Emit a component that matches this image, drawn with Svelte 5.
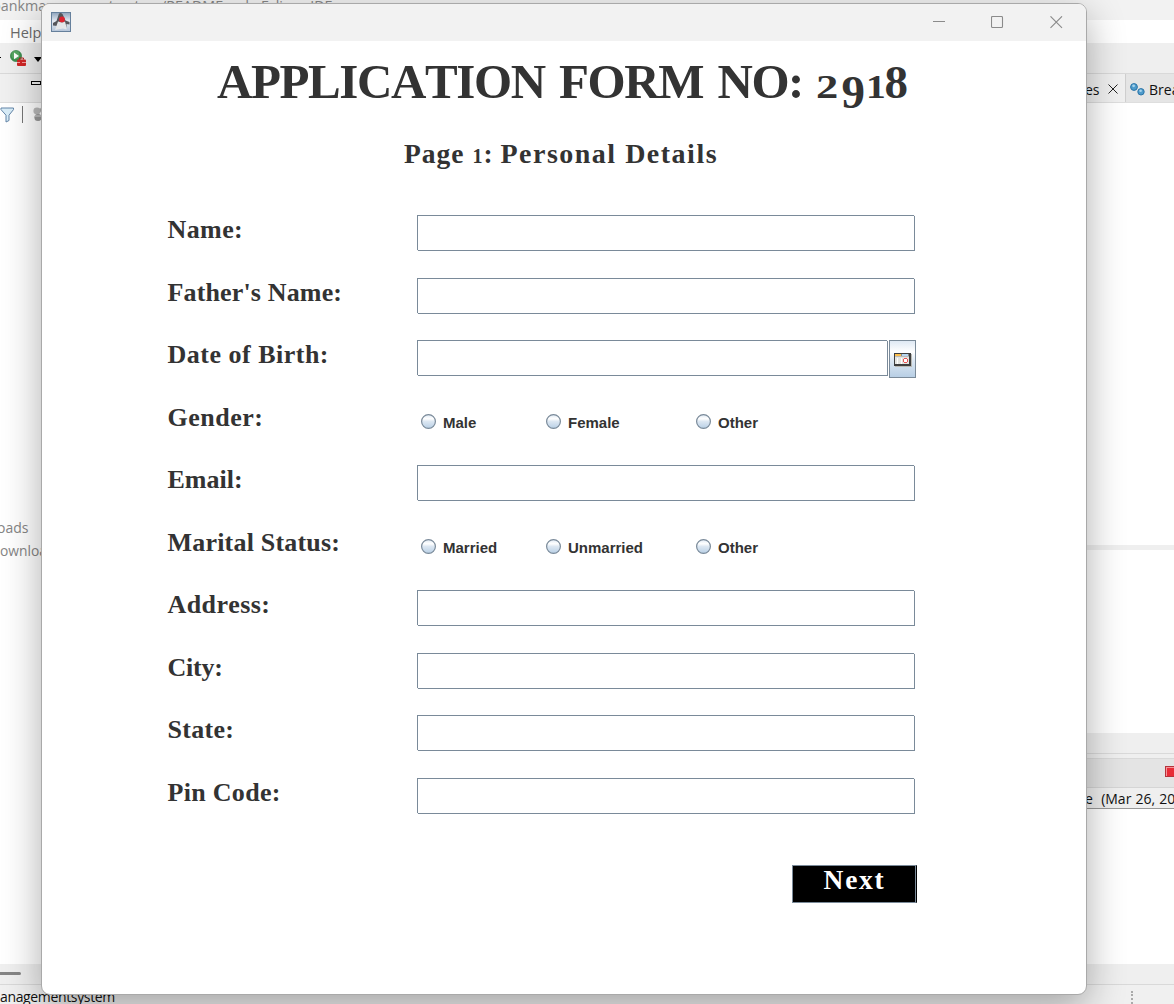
<script>
  const fields = [
    { label: 'Name:', track: 0.4, kind: 'text' },
    { label: "Father's Name:", track: 0.15, kind: 'text' },
    { label: 'Date of Birth:', track: 0.5, kind: 'date' },
    { label: 'Gender:', track: 0.5, kind: 'radio', options: ['Male', 'Female', 'Other'] },
    { label: 'Email:', track: 0, kind: 'text' },
    { label: 'Marital Status:', track: 0.2, kind: 'radio', options: ['Married', 'Unmarried', 'Other'] },
    { label: 'Address:', track: 0.4, kind: 'text' },
    { label: 'City:', track: -0.2, kind: 'text' },
    { label: 'State:', track: 0.3, kind: 'text' },
    { label: 'Pin Code:', track: 0.3, kind: 'text' }
  ];
</script>

<div class="desktop">
  <div class="ide">
    <div class="ide-title"><span>bankmanagementsystem/README.md - Eclipse IDE</span></div>
    <div class="menu">Help</div>
    <div class="toolbar">
      <i class="dash"></i>
      <svg class="run" width="17" height="17" viewBox="0 0 17 17">
        <circle cx="6" cy="6" r="5.6" fill="#3d9250" stroke="#2c7c3f" stroke-width=".6" />
        <circle cx="5.5" cy="5" r="4" fill="#6bb46f" opacity=".6" />
        <path d="M4 2.6v6.6l5-3.3z" fill="#fff" />
        <path d="M9.5 9.5v-1.5h4v1.5" fill="none" stroke="#b52020" />
        <rect x="7" y="9.5" width="9" height="6.5" rx="1" fill="#d12626" />
        <path d="M7 12.5h3m2 0h4" stroke="#f6a0a0" />
      </svg>
      <svg class="caret" width="8" height="5" viewBox="0 0 8 5"><path d="M0 0h8L4 5z" fill="#000" /></svg>
    </div>
    <div class="tabs">
      <i class="mini"></i>
      <div class="right-tabs">
        <div class="tab first">es
          <svg width="10" height="10" viewBox="0 0 10 10"><path d="M.5.5l9 9m0-9l-9 9" stroke="#222" fill="none" /></svg>
        </div>
        <div class="tab second">
          <svg width="15" height="13" viewBox="0 0 15 13">
            <circle cx="4" cy="4" r="3.4" fill="#4e9bcb" stroke="#2c75a8" />
            <circle cx="3.6" cy="2.8" r="1.4" fill="#a6d3ec" />
            <circle cx="11" cy="8.8" r="3.2" fill="#4e9bcb" stroke="#2c75a8" />
            <circle cx="10.6" cy="7.7" r="1.3" fill="#a6d3ec" />
          </svg>
          Breakpoints
        </div>
      </div>
    </div>
    <div class="work">
      <div class="left">
        <div class="tools">
          <svg width="15" height="16" viewBox="0 0 15 16"><path d="M1 1h12.5v1.6L9 8.2v5.3L6 15V8.2L1 2.6z" fill="#d9edf8" stroke="#6385a8" /></svg>
          <i></i>
          <svg class="db" width="10" height="15" viewBox="0 0 10 15">
            <ellipse cx="4" cy="4" rx="3.6" ry="3.4" fill="#bbb" /><ellipse cx="9" cy="3" rx="2" ry="2.4" fill="#aaa" />
            <ellipse cx="5" cy="10.5" rx="3.6" ry="3.6" fill="#999" /><path d="M2 9h6" stroke="#ddd" />
          </svg>
        </div>
        <p>oads</p>
        <p class="downloads">ownloads</p>
      </div>
      <div class="right">
        <div class="pane one"></div>
        <div class="split"></div>
        <div class="pane two"></div>
        <div class="gap"></div>
        <div class="console-tabs"><i></i></div>
        <div class="console-head">e&nbsp; (Mar 26, 2023)</div>
      </div>
    </div>
    <div class="scroll"><i></i></div>
    <div class="status"><span>anagementsystem</span><i></i></div>
  </div>

  <section class="window">
    <header>
      <svg class="java" width="20" height="20" viewBox="0 0 20 20">
        <defs><linearGradient id="sky" x2="0" y2="1"><stop stop-color="#8ea3bb" /><stop offset=".45" stop-color="#e4eaf2" /><stop offset="1" stop-color="#b4c4d8" /></linearGradient></defs>
        <rect x=".5" y=".5" width="19" height="19" fill="url(#sky)" stroke="#66809c" />
        <path d="M8 1.500q2-1 3.500.5l3 6.500 4 1.500v2.500l-3-.5v3.500l-9-1.500-4.500-.5v-2.500l3.500-2z" fill="#55565a" />
        <path d="M7 9.500l4 1 3-1 1.500 5.500v2.500l-3.500-1-3 .5-5 1z" fill="#e4e6e8" />
        <circle cx="11" cy="7.400" r="2.900" fill="#dc2430" />
      </svg>
      <div class="controls">
        <svg width="13" height="13" viewBox="0 0 13 13"><path d="M1 5.5h12" /></svg>
        <svg width="13" height="13" viewBox="0 0 13 13"><rect x=".5" y=".5" width="11" height="11" rx="1" /></svg>
        <svg width="13" height="13" viewBox="0 0 13 13"><path d="M.5.3l11.5 11.5M12 .3L.5 11.8" /></svg>
      </div>
    </header>
    <main>
      <h1>APPLICATION FORM NO: <span class="num"><b class="two-digit">2</b><b class="nine">9</b><b class="one-digit">1</b><b class="eight">8</b></span></h1>
      <h2>Page <b class="one">1</b>: <span>Personal Details</span></h2>
      <form>
        {#each fields as f}
          <div class="row">
            <span class="label" style:letter-spacing="{f.track}px">{f.label}</span>
            {#if f.kind === 'radio'}
              <div class="radios">
                {#each f.options as o}
                  <label>
                    <svg width="16" height="16" viewBox="0 0 16 16">
                      <defs><linearGradient id="bead" x2="0" y2="1"><stop stop-color="#dfe9f4" /><stop offset=".3" stop-color="#fff" /><stop offset=".5" stop-color="#dce7f2" /><stop offset="1" stop-color="#b8cfe5" /></linearGradient></defs>
                      <circle cx="7.5" cy="7.5" r="6.9" fill="url(#bead)" stroke="#7a8a99" stroke-width="1.2" />
                    </svg>{o}
                  </label>
                {/each}
              </div>
            {:else}
              <div class="field" class:short={f.kind === 'date'}></div>
              {#if f.kind === 'date'}
                <div class="calendar">
                  <svg width="18" height="14" viewBox="0 0 18 14" shape-rendering="crispEdges">
                    <path d="M1 1h17v13H1z" fill="#b9b9b4" />
                    <path d="M0 0h17v13H0z" fill="#3e3e3e" />
                    <path d="M1 3h14v8H1z" fill="#e4e4e0" />
                    <path d="M1 1h6v2H1z" fill="#fdbf4c" />
                    <path d="M7 1h1v2H7zM14 1h1v3h-1z" fill="#888" />
                    <path d="M8 1h6v2H8z" fill="#b5d6f0" />
                    <path d="M1 3h14v1H1z" fill="#bbb" />
                    <path d="M3 5h1v6H3zM7 5h1v6H7z" fill="#fff" />
                    <path d="M10 5h3v1h1v3h-1v1h-3V9H9V6h1z" fill="#e95353" />
                    <path d="M10 6h3v3h-3z" fill="#fff" />
                  </svg>
                </div>
              {/if}
            {/if}
          </div>
        {/each}
      </form>
      <div class="actions"><button type="button">Next</button></div>
    </main>
  </section>
</div>

<style>
  :global(body) { margin: 0; }
  * { box-sizing: border-box; }
  svg { display: block; flex: none; }
  .desktop { position: relative; width: 1174px; height: 1004px; overflow: hidden; background: #fff; font-family: "Open Sans", "Noto Sans", sans-serif; }
  .ide { display: flex; flex-direction: column; height: 100%; font-size: 14px; color: #111; white-space: nowrap; }
  .ide-title { height: 20px; background: #f2f2f2; color: #858585; line-height: 20px; }
  .ide-title span { display: block; margin: -4px 0 0 -8px; font-size: 14.3px; }
  .menu { height: 23px; padding-left: 10px; color: #6b6b6b; font-size: 14.5px; line-height: 25px; }
  .toolbar { display: flex; height: 31px; background: #efefef; border-bottom: 1px solid #d9d9d9; align-items: flex-start; }
  .dash { width: 1px; height: 1px; margin-top: 14px; background: #000; }
  .run { margin: 7px 0 0 9px; }
  .caret { margin: 14px 0 0 7px; }
  .tabs { display: flex; justify-content: space-between; height: 29px; background: #f0f0f0; border-bottom: 1px solid #dedede; }
  .mini { width: 10px; height: 4px; margin: 7px 0 0 31px; border: 1px solid #000; }
  .right-tabs { display: flex; width: 92px; overflow: hidden; }
  .tab { display: flex; flex: none; align-items: center; padding-top: 2px; font-size: 14px; }
  .first { width: 43px; padding-left: 3px; gap: 8px; }
  .second { width: 100px; padding-left: 4px; gap: 4px; background: #e5e5e5; border-left: 1px solid #cfcfcf; }
  .work { display: flex; justify-content: space-between; height: 861px; }
  .left { width: 41px; overflow: hidden; color: #858585; }
  .left p { margin: 0; height: 23px; line-height: 23px; margin-left: -3px; font-size: 14px; }
  .left .downloads { margin-left: 0; font-size: 13.8px; }
  .tools { display: flex; height: 413px; padding-top: 4px; align-items: flex-start; }
  .tools i { flex: none; width: 1px; height: 17px; margin: -1px 10px 0 7px; background: #777; }
  .right { width: 90px; overflow: hidden; }
  .one.pane { height: 442px; }
  .split { height: 5px; background: #efefef; }
  .two { height: 183px; }
  .gap { height: 26px; background: linear-gradient(#efefef 20px, #d9d9d9 20px 21px, #efefef 21px 25px, #d9d9d9 25px); }
  .console-tabs { display: flex; justify-content: flex-end; height: 29px; padding-top: 7px; background: #e4e4e4; border-bottom: 1px solid #d5d5d5; }
  .console-tabs i { width: 9px; height: 11px; background: #e82c37; border: 1px solid #b5323b; border-right: 0; box-shadow: inset 1px 1px #f5949a; }
  .console-head { height: 21px; padding-left: 1px; background: #efefef; border-bottom: 1px solid #999; line-height: 21px; font-size: 14px; word-spacing: .5px; }
  .scroll { height: 21px; background: #efefef; border-bottom: 1px solid #d9d9d9; padding-top: 8px; }
  .scroll i { display: block; width: 21px; height: 3px; background: #858585; border-radius: 0 2px 2px 0; }
  .status { display: flex; height: 19px; background: #f0f0f0; line-height: 24px; font-size: 14px; letter-spacing: -.35px; }
  .status i { margin: 6px 0 0 auto; width: 1px; margin-right: 41px; border-left: 2px dotted #aaa; }

  .window { position: absolute; left: 41px; top: 3px; width: 1046px; height: 992px; overflow: hidden; border: 1px solid #a9a9a9; border-radius: 9px; background: #fff; box-shadow: 0 12px 38px rgba(0, 0, 0, .32); color: #333; }
  header { display: flex; justify-content: space-between; height: 37px; padding: 8px 23px 0 9px; background: #f2f2f2; }
  .controls { display: flex; gap: 46px; padding-top: 4px; }
  .controls svg { fill: none; stroke: #8b8b8b; stroke-width: 1.1; }
  main { font-family: "Liberation Serif", "Times New Roman", serif; font-weight: 700; }
  h1, h2 { margin: 0; white-space: nowrap; font-kerning: none; }
  h1 { height: 90px; padding: 13px 0 0 175px; font-size: 49px; line-height: 56px; letter-spacing: -1.4px; word-spacing: 3.5px; }
  .num { display: inline-flex; align-items: baseline; margin-left: -1px; letter-spacing: 0; }
  .num b { display: block; transform-origin: 0 50%; }
  .two-digit { width: 25px; font-size: 33px; transform: scaleX(1.35); }
  .nine { width: 25px; font-size: 47px; position: relative; top: 10px; }
  .one-digit { width: 18px; font-size: 33px; transform: scaleX(1.2); }
  .eight { font-size: 47px; }
  h2 { height: 84px; padding: 7px 0 0 362px; font-size: 27.5px; line-height: 32px; letter-spacing: 1px; word-spacing: 0; }
  h2 .one { font-size: 20px; letter-spacing: 1px; }
  h2 span { margin-left: -1px; font-size: 28px; letter-spacing: 1.5px; }
  form { height: 625px; }
  .row { display: flex; align-items: flex-start; height: 62.5px; padding-left: 125px; }
  .label { width: 250px; padding-left: .5px; line-height: 30px; font-size: 26px; white-space: nowrap; font-kerning: none; }
  .field { position: relative; width: 498px; height: 36px; border: 1px solid #7a8a99; }
  .field::before, .field::after { content: ""; position: absolute; width: 1px; height: 1px; background: #f4f5f6; }
  .field::before { left: -1px; bottom: -1px; }
  .field::after { right: -1px; top: -1px; }
  .short { width: 471px; }
  .calendar { width: 27px; height: 38px; margin-left: 1px; padding: 12px 0 0 4px; border: 1px solid #7a8a99; background: linear-gradient(#dfe9f4, #fff 30%, #dce7f2 55%, #b8cfe5); }
  .radios { display: flex; padding: 11px 0 0 4px; font: 700 15px/18px "Liberation Sans", Arial, sans-serif; }
  .radios label { display: flex; gap: 6px; width: 150px; }
  .radios label:first-child { width: 125px; }
  .actions { display: flex; padding: 25px 0 0 750px; }
  button { width: 125px; height: 38px; padding: 0 0 9px; border: 1px solid #7a8a99; border-right-color: #000; background: #000; color: #fff; font: 700 27.5px/28px "Liberation Serif", serif; letter-spacing: 1.7px; box-shadow: inset -1px 0 #7a8a99; }
</style>
